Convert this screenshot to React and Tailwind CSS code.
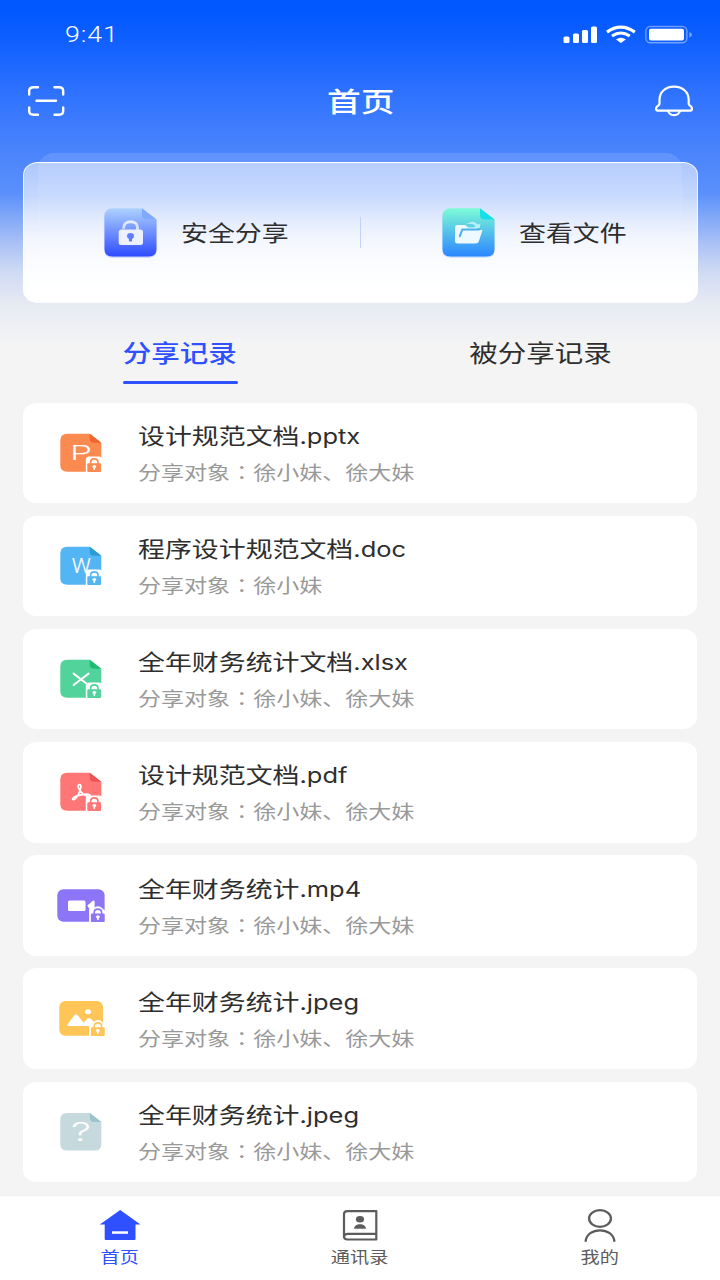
const CJK = "font-['Roboto','Noto_Sans_CJK_SC',sans-serif]";

function Wide({ className = '', center = false, children }) {
  return (
    <span
      className={`inline-block whitespace-nowrap scale-x-[1.218] ${center ? 'origin-center' : 'origin-left'} ${className}`}
    >
      {children}
    </span>
  );
}

function StatusIcons() {
  return (
    <svg width="130" height="20" viewBox="562 25 130 20" fill="#fff" className="translate-y-[0.500px]">
      <rect x="563.5" y="37" width="6" height="6.5" rx="1.5" />
      <rect x="573" y="34" width="6" height="9.5" rx="1.5" />
      <rect x="582" y="30.5" width="6" height="13" rx="1.5" />
      <rect x="591" y="27" width="6" height="16.5" rx="1.5" />
      <g fill="none" stroke="#fff">
        <path d="M607 32.6 Q620.8 22.6 634.8 32.6" strokeWidth="3.2" />
        <path d="M612 36.6 Q620.8 30.4 629.8 36.6" strokeWidth="3" />
      </g>
      <path d="M616 39.9 Q620.8 36.6 625.8 39.9 L620.9 43.6Z" />
      <rect x="645.9" y="27" width="41" height="16.3" rx="4.5" fill="none" stroke="#fff" strokeOpacity=".4" strokeWidth="1.4" />
      <rect x="649" y="29.3" width="35" height="11.8" rx="2" />
      <path d="M689.4 32.5 Q692 33.5 692 35.2 Q692 37 689.4 38Z" opacity=".45" />
    </svg>
  );
}

function ScanIcon() {
  return (
    <svg width="38" height="32" viewBox="27 85 38 32" fill="none" stroke="#fff" strokeLinecap="round" strokeWidth="2.4">
      <path d="M38 87.2H33.5Q29.2 87.2 29.2 91V94.5M54.500 87.200H59Q63.200 87.200 63.200 91V94.500M29.200 107.500V111Q29.200 114.700 33.500 114.700H38M63.200 107.500V111Q63.200 114.700 59 114.700H54.500M36.500 100.800H56" />
    </svg>
  );
}

function BellIcon() {
  return (
    <svg width="40" height="34" viewBox="654 84 40 34" fill="none" stroke="#fff" strokeLinejoin="round" strokeWidth="2.2">
      <path d="M659.500 104V100C659.500 92 665.500 86.600 674 86.600C682.500 86.600 688.700 92 688.700 100V104Q689 105.200 690.800 106.300Q692.200 107.300 692 109Q691.800 110.700 689.500 110.700H658.500Q656.300 110.700 656 109Q655.900 107.300 657.300 106.300Q659.200 105.200 659.500 104Z" />
      <path d="M668 111Q669.500 115.200 674 115.200Q678.500 115.200 680 111" />
    </svg>
  );
}

function ShareIcon() {
  return (
    <svg width="60" height="56" viewBox="100 205 60 56" className="shrink-0">
      <defs>
        <linearGradient id="share" x1="0" y1="0" x2="0" y2="1">
          <stop offset="0" stopColor="#aed2ff" />
          <stop offset="1" stopColor="#2f4cff" />
        </linearGradient>
        <linearGradient id="lock" gradientUnits="userSpaceOnUse" x1="0" y1="221" x2="0" y2="231">
          <stop offset="0" stopColor="#e6eeff" />
          <stop offset="1" stopColor="#c9d6ff" />
        </linearGradient>
      </defs>
      <path d="M113 209.200H142L156.500 220V250Q156.500 257.700 148 257.700H113Q104.500 257.700 104.500 250V217Q104.500 209.200 113 209.200Z" fill="#3552f0" opacity=".25" />
      <path d="M113 208.200H142L156.500 219.500V249Q156.500 256.500 148 256.500H113Q104.500 256.500 104.500 249V216Q104.500 208.200 113 208.200Z" fill="url(#share)" />
      <path d="M142 208.200L156.500 219.500H147Q142 219.500 142 215.500Z" fill="#7fabff" />
      <path d="M123.700 227.500C123.700 219.800 137.500 219.800 137.500 227.500V231" fill="none" stroke="url(#lock)" strokeWidth="3" strokeLinecap="round" />
      <rect x="118.700" y="229.500" width="24.300" height="15.500" rx="2.500" fill="#edf0ff" />
      <ellipse cx="130.500" cy="236" rx="3.500" ry="2.900" fill="#5f7dff" />
      <rect x="128.900" y="236" width="3.200" height="5.500" rx="1" fill="#5f7dff" />
    </svg>
  );
}

function FolderIcon() {
  return (
    <svg width="60" height="56" viewBox="438 205 60 56" className="shrink-0">
      <defs>
        <linearGradient id="folder" x1="0" y1="0" x2="0" y2="1">
          <stop offset="0" stopColor="#7dfcd6" />
          <stop offset="1" stopColor="#2b86ff" />
        </linearGradient>
      </defs>
      <path d="M451 209.200H480L494.500 220V250Q494.500 257.700 486 257.700H451Q442.500 257.700 442.500 250V217Q442.500 209.200 451 209.200Z" fill="#2b86ff" opacity=".25" />
      <path d="M451 208.200H480L494.500 219.500V249Q494.500 256.500 486 256.500H451Q442.500 256.500 442.500 249V216Q442.500 208.200 451 208.200Z" fill="url(#folder)" />
      <path d="M480 208.200L494.500 219.500H485Q480 219.500 480 215.500Z" fill="#17dfe6" />
      <path d="M457.500 225H464.500Q466 225 467 226.500L468 227.500H477.500V230H482.500L478.800 241.500Q478.200 243.500 475.500 243.500H457.500Q455 243.500 455 241V227.300Q455 225 457.500 225Z" fill="#eef8ff" />
      <path d="M459.800 236.200L462.300 229.500H479" fill="none" stroke="#45b4ea" strokeWidth="2" strokeLinecap="round" strokeLinejoin="round" />
      <path d="M466 224.300Q473 219 478 224.500L480.300 223.500L479.800 228H473.500L475.500 226Q472.500 222.500 466 224.300Z" fill="#b9f0f3" />
    </svg>
  );
}

function Badge({ x, y, color, wide = false }) {
  return (
    <g transform={`translate(${x} ${y})`}>
      {wide ? (
        <path d="M-1.800 9.500V-3.500Q-1.800 -5.500 0.500 -5.500H3Q4.500 -7.200 7 -7.200Q9.500 -7.200 11 -5.500L15 -2V9.500Z" fill="#fff" />
      ) : (
        <path d="M-1.500 9.500V-3.500Q-1.500 -6.800 2 -6.800H11.500Q14.800 -6.800 14.800 -3.500V9.500Z" fill="#fff" />
      )}
      <path d="M3.300 1V-1C3.300 -5.400 10.700 -5.400 10.700 -1V1" fill="none" stroke={color} strokeWidth="1.600" />
      <rect width="13.800" height="8.700" rx="1.200" fill={color} />
      <ellipse cx="7" cy="3.300" rx="1.900" ry="1.500" fill="#fff" />
      <rect x="6.200" y="3.500" width="1.600" height="3.200" fill="#fff" />
    </g>
  );
}

function Sheet({ color, fold }) {
  return (
    <>
      <path d="M13 4.500H35.500L47 13.500V42.500H13Q6 42.500 6 36V11Q6 4.500 13 4.500Z" fill={color} />
      <path d="M35.500 4.500L47 13.500H40Q35.500 13.500 35.500 10Z" fill={fold} />
    </>
  );
}

function Letter({ children, x = 16.2, y = 31, width = 20.8, size = 19.5 }) {
  return (
    <text
      x={x}
      y={y}
      fontSize={size}
      textLength={width}
      lengthAdjust="spacingAndGlyphs"
      fill="#fff"
      stroke="#fff"
      strokeWidth="0.2"
      className="font-['Roboto','Liberation_Sans',sans-serif] font-light"
    >
      {children}
    </text>
  );
}

function FileIcon({ type }) {
  return (
    <svg width="52" height="48" viewBox="0 0 52 48" className="shrink-0 translate-x-[0.300px] translate-y-[0.300px]">
      {type === 'ppt' && (
        <>
          <Sheet color="#fa8a50" fold="#f0652e" />
          <Letter>P</Letter>
          <Badge x={33} y={33.900} color="#fa8a50" />
        </>
      )}
      {type === 'doc' && (
        <>
          <Sheet color="#53b5f3" fold="#289dd4" />
          <Letter x={17.400} y={30.500} width={19}>W</Letter>
          <Badge x={33} y={33.900} color="#53b5f3" />
        </>
      )}
      {type === 'xls' && (
        <>
          <Sheet color="#52d39b" fold="#20bb73" />
          <path d="M19.300 18.300L35 30.500M34.300 18.300L19.300 29.700" fill="none" stroke="#fff" strokeWidth="2" strokeLinecap="round" />
          <Badge x={33} y={33.900} color="#52d39b" />
        </>
      )}
      {type === 'pdf' && (
        <>
          <Sheet color="#ff7677" fold="#ee5253" />
          <path
            d="M25.300 16.300C23.300 16.300 23.500 18.600 24.700 20.600C26.200 23.400 29.500 27.200 34 28.300C36.500 28.700 36.500 26.200 34 26C30 25.600 23 26.800 19.600 29C17.300 30.600 18.300 32 20.300 30.900C23.200 29.200 25.800 23 26.500 19.200C26.800 17.500 26.400 16.300 25.300 16.300Z"
            fill="none"
            stroke="#fff"
            strokeWidth="1.700"
          />
          <Badge x={33} y={33.900} color="#ff7677" />
        </>
      )}
      {type === 'video' && (
        <>
          <rect x="3" y="7" width="47.300" height="32.500" rx="6" fill="#8d75f8" />
          <rect x="13.700" y="18.300" width="17.500" height="10.500" rx="1.500" fill="#fff" />
          <path d="M33 23.200L38.500 18.500Q40.300 17.500 40.300 19.500V29H36.500Z" fill="#fff" />
          <Badge x={36.600} y={31.100} color="#8d75f8" wide />
        </>
      )}
      {type === 'image' && (
        <>
          <rect x="5" y="5.800" width="43.700" height="34.700" rx="6" fill="#ffc557" />
          <ellipse cx="33.700" cy="16.500" rx="3" ry="2.500" fill="#fff" />
          <path d="M13.300 29L20 20Q21.700 17.800 23.500 20L29.300 27.500L33 23.500Q34.700 21.800 36.500 23.500L41 28V30.700H14.500Q12.700 30.700 13.300 29Z" fill="#fff" />
          <Badge x={36.600} y={31.900} color="#ffc557" wide />
        </>
      )}
      {type === 'unknown' && (
        <>
          <path d="M13 4.800H35.500L47 13.700V36Q47 42.300 40.500 42.300H13Q6 42.300 6 36V11Q6 4.800 13 4.800Z" fill="#c6dade" />
          <path d="M35.500 4.800L47 13.700H40Q35.500 13.700 35.500 10Z" fill="#9cc2cb" />
          <text x="16.800" y="32.500" fontSize="25.500" textLength="20" lengthAdjust="spacingAndGlyphs" fill="#fff" className="font-['Inter',sans-serif] font-light">?</text>
        </>
      )}
    </svg>
  );
}

const files = [
  { type: 'ppt', name: '设计规范文档', ext: '.pptx', people: '徐小妹、徐大妹' },
  { type: 'doc', name: '程序设计规范文档', ext: '.doc', people: '徐小妹' },
  { type: 'xls', name: '全年财务统计文档', ext: '.xlsx', people: '徐小妹、徐大妹' },
  { type: 'pdf', name: '设计规范文档', ext: '.pdf', people: '徐小妹、徐大妹' },
  { type: 'video', name: '全年财务统计', ext: '.mp4', people: '徐小妹、徐大妹' },
  { type: 'image', name: '全年财务统计', ext: '.jpeg', people: '徐小妹、徐大妹' },
  { type: 'unknown', name: '全年财务统计', ext: '.jpeg', people: '徐小妹、徐大妹' },
];

function FileCard({ type, name, ext, people }) {
  return (
    <li className="flex h-[100.600px] shrink-0 items-start rounded-[14px/12px] bg-white pl-[31px] pt-[26.400px]">
      <FileIcon type={type} />
      <div className="-mt-[9px] ml-[32px] flex flex-col">
        <Wide className="h-[33px] text-[22.100px] leading-[33px] text-[#2e2e2e]">
          {name}
          <span className="font-['Inter',sans-serif] text-[20.900px]">{ext}</span>
        </Wide>
        <Wide className="mt-[5px] h-[28px] text-[18.920px] leading-[28px] text-[#999]">
          分享对象<span className="font-['Noto_Sans_CJK_TC',sans-serif]">：</span>{people}
        </Wide>
      </div>
    </li>
  );
}

function HomeIcon() {
  return (
    <svg width="42" height="34" viewBox="99 1209 42 34">
      <path d="M120.200 1210L140.500 1224.500H135.500V1239Q135.500 1240 134.500 1240H105.700Q104.700 1240 104.700 1239V1224.500H99.800Z" fill="#2f50ff" />
      <rect x="112" y="1231.300" width="16" height="2.500" fill="#fff" />
    </svg>
  );
}

function ContactsIcon() {
  return (
    <svg width="42" height="34" viewBox="339 1208.500 42 34" fill="none" stroke="#5c5c5c" strokeWidth="2.200">
      <path d="M347.500 1210.600H376.300V1239H347.500Q344 1239 344 1236V1213.500Q344 1210.600 347.500 1210.600Z" strokeLinejoin="round" />
      <path d="M344 1236.500Q344 1233.400 348 1233.400H376.300" />
      <g fill="#5c5c5c" stroke="none">
        <ellipse cx="360" cy="1218.800" rx="4.100" ry="3.300" />
        <path d="M354 1228.200C354.500 1222.300 365.500 1222.300 366 1228.200Z" />
      </g>
    </svg>
  );
}

function MeIcon() {
  return (
    <svg width="42" height="34" viewBox="579 1208.500 42 34" fill="none" stroke="#5c5c5c" strokeWidth="2.300">
      <ellipse cx="600" cy="1218" rx="10.900" ry="8.300" />
      <path d="M585.600 1241.200C586.500 1226 613.500 1226 614.400 1241.200" />
    </svg>
  );
}

const tabs = [
  { label: '首页', icon: HomeIcon, color: 'text-[#2f50ff]' },
  { label: '通讯录', icon: ContactsIcon, color: 'text-[#5c5c5c]' },
  { label: '我的', icon: MeIcon, color: 'text-[#5c5c5c]' },
];

export default function App() {
  return (
    <div
      className={`flex h-[1280px] w-[720px] flex-col overflow-hidden bg-[#f4f4f4] bg-[linear-gradient(180deg,#0057ff_0px,#0459ff_20px,#3576ff_105px,#4a84fc_150px,#5b90fb_194px,#7ea6f8_215px,#a9c1f5_243px,#cdd9f4_270px,#e6eaf2_303px,#f4f4f4_345px)] ${CJK}`}
    >
      <header className="flex h-[153px] shrink-0 flex-col text-white">
        <div className="flex h-[68px] items-center justify-between pl-[65px] pr-[28px]">
          <Wide className="pt-px text-[22px] font-light tracking-[0.700px]">9:41</Wide>
          <StatusIcons />
        </div>
        <div className="flex h-[66px] items-center justify-between pl-[27px] pr-[26px]">
          <ScanIcon />
          <h1 className="pl-[2px] pt-[3px] text-[27.700px] font-medium leading-none">
            <Wide center>首页</Wide>
          </h1>
          <BellIcon />
        </div>
      </header>

      <section className="relative h-[150px] shrink-0 px-[22.500px] pt-[9px]">
        <div className="absolute inset-x-[38px] top-0 h-[110px] rounded-t-[16px] bg-linear-to-b from-white/12 to-white/0" />
        <div className="relative flex h-[141px] items-center rounded-[15px/13px] border border-white/80 bg-[linear-gradient(180deg,rgba(255,255,255,0.540)_0%,rgba(255,255,255,0.640)_25%,rgba(255,255,255,0.860)_55%,#fff_95%)]">
          <div className="flex w-[336.500px] shrink-0 items-center pl-[76.500px]">
            <ShareIcon />
            <Wide className="ml-[20.500px] pt-[2px] text-[22.100px] text-[#2e2e2e]">安全分享</Wide>
          </div>
          <div className="h-[31px] w-px shrink-0 bg-[#c3d2fb]" />
          <div className="flex flex-1 items-center pl-[77px]">
            <FolderIcon />
            <Wide className="ml-[20.500px] pt-[2px] text-[22.100px] text-[#2e2e2e]">查看文件</Wide>
          </div>
        </div>
      </section>

      <nav className="grid h-[99.500px] shrink-0 grid-cols-2">
        <div className="flex flex-col items-center pt-[33px]">
          <Wide center className="h-[36px] text-[23.400px] font-medium leading-[36px] text-[#2f50ff]">分享记录</Wide>
          <div className="mt-[8.500px] h-[3px] w-[115px] rounded-full bg-[#2f50ff]" />
        </div>
        <div className="flex flex-col items-center pt-[33px]">
          <Wide center className="h-[36px] text-[23.400px] leading-[36px] text-[#2e2e2e]">被分享记录</Wide>
        </div>
      </nav>

      <ul className="flex shrink-0 flex-col gap-[12.600px] px-[23px]">
        {files.map((file, i) => (
          <FileCard key={i} {...file} />
        ))}
      </ul>

      <footer className="mt-auto grid h-[85px] shrink-0 grid-cols-3 border-t border-[#f0f0f0] bg-white">
        {tabs.map(({ label, icon: Icon, color }) => (
          <div key={label} className={`flex flex-col items-center pt-[13px] ${color}`}>
            <Icon />
            <Wide center className="mt-[4px] text-[15.760px] leading-[22px]">{label}</Wide>
          </div>
        ))}
      </footer>
    </div>
  );
}
